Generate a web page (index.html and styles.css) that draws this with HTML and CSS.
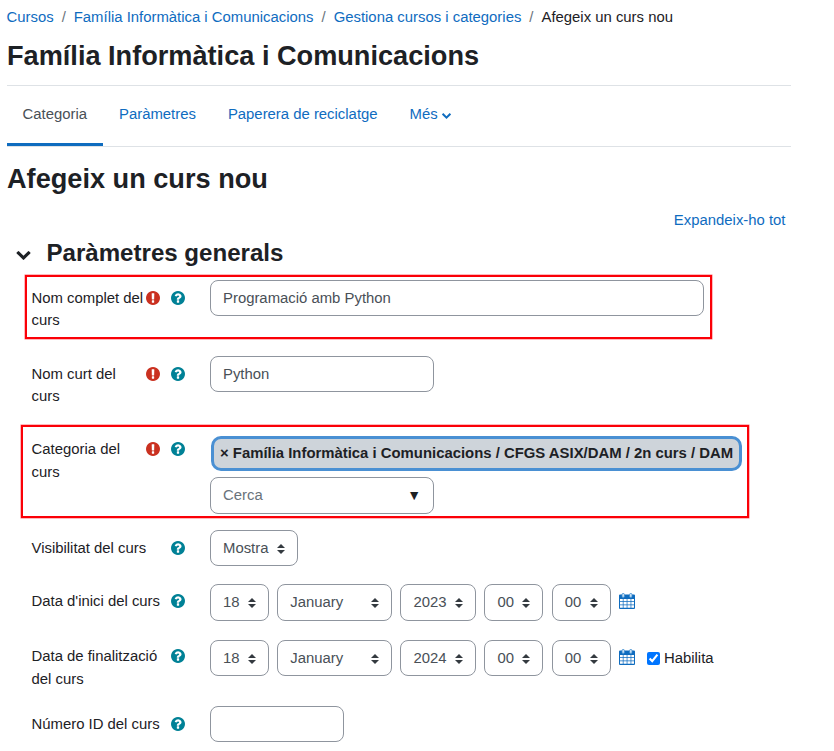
FILE: index.html
```html
<!DOCTYPE html>
<html lang="ca">
<head>
<meta charset="utf-8">
<title>Afegeix un curs nou</title>
<link rel="stylesheet" href="styles.css">
</head>
<body>
<svg class="sprite" aria-hidden="true">
  <symbol id="req" viewBox="128 128 1536 1536"><path d="M896 128q209 0 385.5 103t279.5 279.5 103 385.5-103 385.5-279.5 279.5-385.5 103-385.5-103-279.5-279.5-103-385.5 103-385.5 279.5-279.5 385.5-103zm128 1247v-190q0-14-9-23.5t-22-9.5h-192q-13 0-23 10t-10 23v190q0 13 10 23t23 10h192q13 0 22-9.5t9-23.5zm-2-344l18-621q0-12-10-18-10-8-24-8h-220q-14 0-24 8-10 6-10 18l17 621q0 10 10 17.5t24 7.5h185q14 0 23.5-7.5t10.5-17.5z"/></symbol>
  <symbol id="help" viewBox="0 128 1536 1536"><path d="M896 1376v-192q0-14-9-23t-23-9h-192q-14 0-23 9t-9 23v192q0 14 9 23t23 9h192q14 0 23-9t9-23zM1152 704q0-88-55.500-163t-138.500-116t-170-41q-243 0-371 213q-15 24 8 42l132 100q7 6 19 6q16 0 25-12q53-68 86-92q34-24 86-24q48 0 85.500 26t37.500 59q0 38-20 61t-68 45q-63 28-115.500 86.500t-52.500 125.500v36q0 14 9 23t23 9h192q14 0 23-9t9-23q0-19 21.500-49.500t54.500-49.500q32-18 49-28.500t46-35t44.500-48t28-60.500t12.500-81zM1536 896q0 209-103 385.500t-279.500 279.500t-385.500 103t-385.500-103t-279.500-279.500t-103-385.500t103-385.500t279.500-279.500t385.500-103t385.500 103t279.500 279.500t103 385.500z"/></symbol>
  <symbol id="chev" viewBox="90 533 1612 1035"><path d="M1683 808l-742 741q-19 19-45 19t-45-19l-742-741q-19-19-19-45.500t19-45.500l166-165q19-19 45-19t45 19l531 531 531-531q19-19 45-19t45 19l166 165q19 19 19 45.500t-19 45.500z"/></symbol>
  <symbol id="sort" viewBox="0 0 4 5"><path d="M2 0L0 2h4zm0 5L0 3h4z"/></symbol>
  <symbol id="cal" viewBox="0 0 16 17"><path fill-rule="evenodd" d="M1 1.500h14a1 1 0 0 1 1 1V15a1 1 0 0 1-1 1H1a1 1 0 0 1-1-1V2.500a1 1 0 0 1 1-1zM1 6v2.300h2.800V6zm3.500 0v2.300h3.200V6zm3.900 0v2.300h3.200V6zm3.900 0v2.300H15V6zM1 9v2.500h2.800V9zm3.500 0v2.500h3.200V9zm3.900 0v2.500h3.200V9zm3.900 0v2.500H15V9zM1 12.200v2.600h2.800v-2.600zm3.500 0v2.600h3.200v-2.600zm3.900 0v2.600h3.200v-2.600zm3.900 0v2.600H15v-2.600z"/><rect x="3" y=".4" width="2.400" height="4" rx="1.200" fill="#d4e7f7" stroke="#3a8bd0" stroke-width=".8"/><rect x="10.600" y=".4" width="2.400" height="4" rx="1.200" fill="#d4e7f7" stroke="#3a8bd0" stroke-width=".8"/></symbol>
</svg>
<main class="page">
  <nav class="crumbs"><a>Cursos</a><i>/</i><a>Família Informàtica i Comunicacions</a><i>/</i><a>Gestiona cursos i categories</a><i>/</i><span>Afegeix un curs nou</span></nav>
  <h1>Família Informàtica i Comunicacions</h1>
  <nav class="tabs"><a class="active">Categoria</a><a>Paràmetres</a><a>Paperera de reciclatge</a><a>Més<svg class="more"><use href="#chev"/></svg></a></nav>
  <h2>Afegeix un curs nou</h2>
  <div class="expand"><a>Expandeix-ho tot</a></div>
  <h3><svg class="toggle"><use href="#chev"/></svg>Paràmetres generals</h3>
  <form class="form">
    <div class="row fullname marked">
      <label>Nom complet del curs</label>
      <div class="icons"><svg class="req"><use href="#req"/></svg><svg class="help"><use href="#help"/></svg></div>
      <div class="fields"><div class="control w-full">Programació amb Python</div></div>
    </div>
    <div class="row shortname">
      <label>Nom curt del<br>curs</label>
      <div class="icons"><svg class="req"><use href="#req"/></svg><svg class="help"><use href="#help"/></svg></div>
      <div class="fields"><div class="control w-medium">Python</div></div>
    </div>
    <div class="row category marked">
      <label>Categoria del<br>curs</label>
      <div class="icons"><svg class="req"><use href="#req"/></svg><svg class="help"><use href="#help"/></svg></div>
      <div class="stack">
        <div class="badge"><span>×</span> Família Informàtica i Comunicacions / CFGS ASIX/DAM / 2n curs / DAM</div>
        <div class="control w-medium search"><span>Cerca</span><b>▼</b></div>
      </div>
    </div>
    <div class="row visibility">
      <label>Visibilitat del curs</label>
      <div class="icons"><svg class="help"><use href="#help"/></svg></div>
      <div class="fields"><div class="control select w-show">Mostra<svg><use href="#sort"/></svg></div></div>
    </div>
    <div class="row start">
      <label>Data d'inici del curs</label>
      <div class="icons"><svg class="help"><use href="#help"/></svg></div>
      <div class="fields">
        <div class="control select w-day">18<svg><use href="#sort"/></svg></div>
        <div class="control select w-month">January<svg><use href="#sort"/></svg></div>
        <div class="control select w-year">2023<svg><use href="#sort"/></svg></div>
        <div class="control select w-day">00<svg><use href="#sort"/></svg></div>
        <div class="control select w-day">00<svg><use href="#sort"/></svg></div>
        <svg class="cal"><use href="#cal"/></svg>
      </div>
    </div>
    <div class="row end">
      <label>Data de finalització del curs</label>
      <div class="icons"><svg class="help"><use href="#help"/></svg></div>
      <div class="fields">
        <div class="control select w-day">18<svg><use href="#sort"/></svg></div>
        <div class="control select w-month">January<svg><use href="#sort"/></svg></div>
        <div class="control select w-year">2024<svg><use href="#sort"/></svg></div>
        <div class="control select w-day">00<svg><use href="#sort"/></svg></div>
        <div class="control select w-day">00<svg><use href="#sort"/></svg></div>
        <svg class="cal"><use href="#cal"/></svg>
        <div class="enable"><input type="checkbox" checked>Habilita</div>
      </div>
    </div>
    <div class="row idnumber">
      <label>Número ID del curs</label>
      <div class="icons"><svg class="help"><use href="#help"/></svg></div>
      <div class="fields"><div class="control w-id"></div></div>
    </div>
  </form>
</main>
</body>
</html>
```
FILE: styles.css
```css
*, *::after { box-sizing: border-box; }
body { margin: 0; height: 751px; overflow: hidden; background: #fff; color: #1d2125; font: 14.880px/22.400px "Liberation Sans", Arial, sans-serif; }
.sprite { display: block; width: 0; height: 0; }
svg { display: block; fill: currentColor; flex: none; }
a { color: #0f6cbf; }
h1, h2, h3 { margin: 0; font-weight: 700; white-space: nowrap; }
.page { width: 784px; margin-left: 7px; padding-top: 6px; }
.crumbs { display: flex; height: 22px; margin-left: -.5px; white-space: nowrap; }
.crumbs i { width: 20.150px; text-align: center; font-style: normal; color: #6a737b; }
h1 { height: 57px; font-size: 27.150px; line-height: 56px; }
.tabs { display: flex; height: 62px; border-top: 1px solid #dee2e6; border-bottom: 1px solid #dee2e6; }
.tabs a { display: flex; height: 60px; padding: 17px 16px 0; border-bottom: 3px solid transparent; }
.tabs a:first-child { padding-left: 15.500px; }
.tabs .active { color: #495057; border-color: #0f6cbf; }
.more { width: 9px; height: 6px; margin: 10px 0 0 4px; }
h2 { height: 62px; font-size: 27.150px; line-height: 64px; }
.expand { height: 26px; padding-right: 5.500px; text-align: right; }
h3 { display: flex; align-items: center; height: 37px; font-size: 24.080px; line-height: 36px; padding-bottom: 2px; }
.toggle { width: 15px; height: 9px; margin: 5px 15.500px 0 9px; }
.form { padding: 8px 0 0 24.500px; }
.row { display: grid; position: relative; grid-template-columns: 114.500px 64px auto; justify-content: start; }
.row label { padding-top: 7px; white-space: nowrap; }
.fullname label, .end label { white-space: normal; }
.end label { width: 134px; }
.icons { display: flex; justify-content: flex-end; gap: 11px; padding: 11px 25px 0 0; }
.icons svg { width: 14px; height: 14px; }
.req { color: #ca3120; }
.help { color: #008196; }
.fullname, .shortname { height: 76px; }
.category { height: 98px; }
.visibility { height: 54px; }
.start { height: 56px; }
.end { height: 66px; }
.idnumber { height: 40px; }
.fullname label, .shortname label { line-height: 22px; }
.category label, .end label { line-height: 23px; }
.category label, .start label { padding-top: 6px; }
.end label { padding-top: 5px; }
.category .icons, .start .icons { padding-top: 10px; }
.end .icons { padding-top: 9px; }
.marked::after { content: ""; position: absolute; border: 2px solid #fb0007; box-shadow: 0 0 0 .5px #ff7078; pointer-events: none; }
.fullname::after { left: -6.500px; top: -5px; width: 687px; height: 64px; }
.category::after { left: -10.500px; top: -7px; width: 728px; height: 93px; }
.fields { display: flex; align-items: flex-start; }
.control { display: flex; align-items: center; height: 36px; padding: 0 12px; border: 1px solid #8f959e; border-radius: 8px; color: #495057; }
.start .control { height: 37px; }
.w-full { width: 494px; }
.w-medium { width: 224px; }
.w-show { width: 88px; }
.w-day { width: 59px; }
.w-month { width: 114.800px; }
.w-year { width: 75.700px; }
.w-id { width: 134px; }
.select { justify-content: space-between; margin-right: 8.300px; padding-right: 12px; }
.select svg { width: 8px; height: 10px; margin-top: 1px; color: #343a40; }
.badge { width: 531px; height: 35px; margin: 4px 0 6px 1px; padding: 0 6px; border: 3px solid #4a90d3; border-radius: 10px; background: #ced4da; font-weight: 700; line-height: 28px; white-space: nowrap; }
.search { height: 37px; justify-content: space-between; }
.search span { color: #6a737b; }
.search b { color: #1d2125; font-weight: 400; font-size: 14px; }
.cal { width: 16px; height: 17px; margin-top: 9px; color: #0f6cbf; }
.enable { display: flex; align-items: center; height: 36px; margin-left: 12px; }
.enable input { width: 13px; height: 13px; margin: 1px 4px 0 0; accent-color: #0075ff; }
```
